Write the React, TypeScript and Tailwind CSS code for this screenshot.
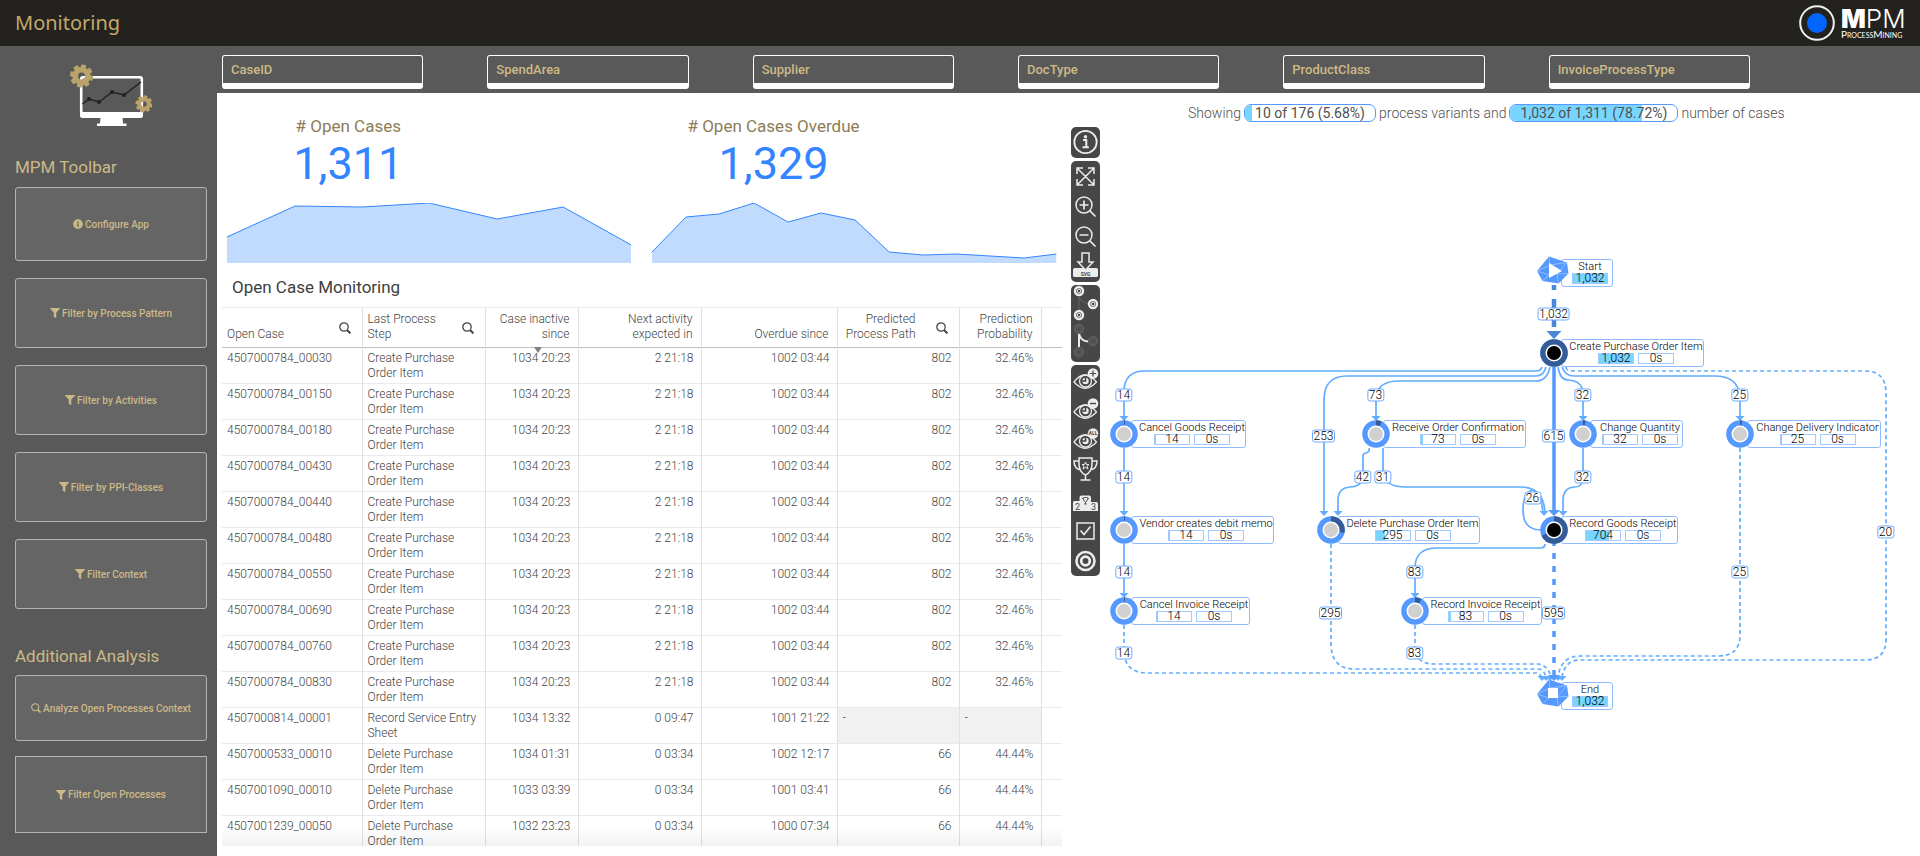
import { ReactNode } from "react";
import { FaFilter, FaInfoCircle } from "react-icons/fa";

const filters = ["CaseID", "SpendArea", "Supplier", "DocType", "ProductClass", "InvoiceProcessType"];

const toolbarButtons = [
  { label: "Configure App", icon: "info", size: "h-[74px]" },
  { label: "Filter by Process Pattern", icon: "filter", size: "h-[70px]" },
  { label: "Filter by Activities", icon: "filter", size: "h-[70px]" },
  { label: "Filter by PPI-Classes", icon: "filter", size: "h-[70px]" },
  { label: "Filter Context", icon: "filter", size: "h-[70px]" },
];

const analysisButtons = [
  { label: "Analyze Open Processes Context", icon: "search", size: "h-[66px]" },
  { label: "Filter Open Processes", icon: "filter", size: "h-[77px]" },
];

const columns = [
  { label: "Open Case", width: 140, search: true },
  { label: "Last Process Step", width: 123, search: true },
  { label: "Case inactive since", width: 93, right: true, sorted: true },
  { label: "Next activity expected in", width: 123, right: true },
  { label: "Overdue since", width: 136, right: true },
  { label: "Predicted Process Path", width: 122, right: true, search: true },
  { label: "Prediction Probability", width: 82, right: true },
];

const createStep = "Create Purchase Order Item";
const deleteStep = "Delete Purchase Order Item";

const rows = [
  ...["00030", "00150", "00180", "00430", "00440", "00480", "00550", "00690", "00760", "00830"].map((n) => [
    `4507000784_${n}`,
    createStep,
    "1034 20:23",
    "2 21:18",
    "1002 03:44",
    "802",
    "32.46%",
  ]),
  ["4507000814_00001", "Record Service Entry Sheet", "1034 13:32", "0 09:47", "1001 21:22", "-", "-"],
  ["4507000533_00010", deleteStep, "1034 01:31", "0 03:34", "1002 12:17", "66", "44.44%"],
  ["4507001090_00010", deleteStep, "1033 03:39", "0 03:34", "1001 03:41", "66", "44.44%"],
  ["4507001239_00050", deleteStep, "1032 23:23", "0 03:34", "1000 07:34", "66", "44.44%"],
];

const TOTAL = 1032;

const nodes = [
  { name: "Create Purchase Order Item", count: 1032, x: 454, y: 113, right: 604, main: true },
  { name: "Cancel Goods Receipt", count: 14, x: 24, y: 194, right: 146 },
  { name: "Receive Order Confirmation", count: 73, x: 276, y: 194, right: 426 },
  { name: "Change Quantity", count: 32, x: 483, y: 194, right: 583 },
  { name: "Change Delivery Indicator", count: 25, x: 640, y: 194, right: 781 },
  { name: "Vendor creates debit memo", count: 14, x: 24, y: 290, right: 174 },
  { name: "Delete Purchase Order Item", count: 295, x: 231, y: 290, right: 380 },
  { name: "Record Goods Receipt", count: 704, x: 454, y: 290, right: 578, main: true },
  { name: "Cancel Invoice Receipt", count: 14, x: 24, y: 371, right: 150 },
  { name: "Record Invoice Receipt", count: 83, x: 315, y: 371, right: 442 },
];

const solidEdges = [
  "M442 127 Q441 131 436 131 H45 Q24 131 24 152 V178",
  "M446 127 Q444 136 436 136 H247 Q224 136 224 160 V273",
  "M450 127 Q447 141 436 141 H298 Q280 141 276 155 V178",
  "M458 127 Q460 140 468 140 Q483 141 483 154 V178",
  "M462 127 Q465 136 474 136 H615 Q637 136 640 155 V178",
  "M24 208 V273",
  "M24 304 V355",
  "M269 208 Q270 212 266 213 Q263 213 263 216 V236 Q262 247 250 247 Q238 248 238 260 V273",
  "M283 208 V236 Q288 247 305 247 H422 Q444 248 445 273",
  "M441 290 Q423 290 423 270 Q423 252 433 250 Q441 252 443 273",
  "M483 208 V240 Q482 247 474 247 Q463 248 463 260 V273",
  "M445 304 Q445 308 440 308 H337 Q315 308 315 328 V355",
];

const dashedEdges = [
  "M466 127 Q466 131 472 131 H765 Q786 131 786 153 V399 Q786 420 765 420 H478 Q465 421 462 437",
  "M640 208 V395 Q640 416 618 416 H480 Q461 416 458 437",
  "M24 385 V413 Q26 433 47 433 H438 L442 437",
  "M231 304 V405 Q232 429 254 429 H438 Q444 429 446 437",
  "M315 385 V413 Q320 424 334 424 H438 Q448 425 451 437",
];

const arrows = [
  [24, 180], [276, 180], [483, 180], [640, 180],
  [24, 275], [224, 275], [238, 275], [444, 275], [463, 275],
  [24, 357], [315, 357],
  [442, 440], [446, 440], [450, 440], [458, 440], [462, 440],
];

const edgeLabels: [string, number, number][] = [
  ["1,032", 454, 74],
  ["14", 24, 155], ["73", 276, 155], ["32", 483, 155], ["25", 640, 155],
  ["253", 224, 196], ["615", 454, 196],
  ["14", 24, 237], ["42", 263, 237], ["31", 283, 237], ["32", 483, 237],
  ["26", 433, 258], ["20", 786, 292],
  ["14", 24, 332], ["83", 315, 332], ["25", 640, 332],
  ["295", 231, 373], ["595", 454, 373],
  ["14", 24, 413], ["83", 315, 413],
];

function SearchIcon({ className }: { className: string }) {
  return (
    <svg viewBox="0 0 12 12" className={className} fill="none" stroke="currentColor">
      <circle cx="5" cy="5" r="4.2" strokeWidth="1.3" />
      <path d="M8 8 L11.4 11.4" strokeWidth="2" />
    </svg>
  );
}

function Gear({ cx, cy, r, hole }: { cx: number; cy: number; r: number; hole: number }) {
  return (
    <g transform={`translate(${cx} ${cy})`}>
      {[0, 45, 90, 135, 180, 225, 270, 315].map((a) => (
        <path
          key={a}
          d={`M${-r * 0.26} ${-r * 0.6} L${-r * 0.2} ${-r} H${r * 0.2} L${r * 0.26} ${-r * 0.6} Z`}
          fill="#b9a36b"
          transform={`rotate(${a + 12})`}
        />
      ))}
      <circle r={(r * 0.78 + hole) / 2} fill="none" stroke="#b9a36b" strokeWidth={r * 0.78 - hole} />
    </g>
  );
}

function MonitorIcon() {
  return (
    <svg viewBox="70 64 82 64" className="h-16 w-[82px]">
      <rect x="81.2" y="77.2" width="60.6" height="36" rx="2" fill="none" stroke="#fff" strokeWidth="2.6" />
      <path d="M80 112 H143 V115.500 Q143 118 140.500 118 H82.500 Q80 118 80 115.500 Z" fill="#fff" />
      <path d="M100.500 118 H122.500 L123 123.500 H126.500 V126 H97 V123.500 H100 Z" fill="#fff" />
      <path d="M82.500 104 L89 99 L99 102 L112 92 L124 95 L141 82" fill="none" stroke="#24221e" strokeWidth="1.5" />
      {[[89, 99], [99, 102], [112, 92], [124, 95]].map(([x, y]) => (
        <circle key={x} cx={x} cy={y} r="2" fill="#24221e" />
      ))}
      <Gear cx={81.5} cy={76} r={11.5} hole={3.5} />
      <Gear cx={144} cy={104} r={8.5} hole={2.8} />
    </svg>
  );
}

function SideButton({ label, icon, size, square }: { label: string; icon: string; size: string; square?: boolean }) {
  return (
    <button
      className={`flex w-full items-center justify-center gap-[2px] border border-[#b3b3b3] bg-[#656565] text-[10px] font-medium text-[#cdb987] ${size} ${
        square ? "" : "rounded-[3px]"
      }`}
    >
      {icon === "info" && <FaInfoCircle className="h-[10px] w-[10px]" />}
      {icon === "filter" && <FaFilter className="h-[10px] w-[10px]" />}
      {icon === "search" && <SearchIcon className="h-[10px] w-[10px]" />}
      <span>{label}</span>
    </button>
  );
}

function Kpi({ title, value, points }: { title: string; value: string; points: string }) {
  return (
    <div>
      <div className="w-3/5 text-center whitespace-nowrap">
        <h2 className="text-[17px] leading-6 text-[#8c7d56]">{title}</h2>
        <div className="text-[45px] leading-[52px] text-[#3385ff]">{value}</div>
      </div>
      <svg viewBox="0 0 404 60" preserveAspectRatio="none" className="mt-[13px] block h-[60px] w-full">
        <polygon points={`0,60 ${points} 404,60`} fill="#c1dbff" />
        <polyline points={points} fill="none" stroke="#3385ff" strokeWidth="1" vectorEffect="non-scaling-stroke" />
      </svg>
    </div>
  );
}

function CaseTable() {
  return (
    <div className="relative mb-[10px] min-h-0 flex-1 overflow-hidden border-t border-[#ebebeb]">
      <table className="w-full table-fixed border-collapse text-[12px] leading-[15px] font-light text-[#454545]">
        <colgroup>
          {columns.map((c) => (
            <col key={c.label} style={{ width: c.width }} />
          ))}
          <col />
        </colgroup>
        <thead>
          <tr className="h-[39px] border-b border-[#bfbfbf]">
            {columns.map((c) => (
              <th
                key={c.label}
                className={`relative border-r border-[#e0e0e0] pb-[5px] pl-[5px] align-bottom font-light ${
                  c.search ? "pr-[11px]" : "pr-2"
                } ${c.right ? "text-right" : "text-left"}`}
              >
                <div className={`flex items-end gap-5 ${c.right ? "justify-end" : "justify-between"}`}>
                  <span className={c.search && !c.right ? "w-[78px]" : ""}>{c.label}</span>
                  {c.search && (
                    <button aria-label={`Search ${c.label}`} className="mb-2 shrink-0">
                      <SearchIcon className="h-3 w-3" />
                    </button>
                  )}
                </div>
                {c.sorted && (
                  <svg viewBox="0 0 8 6" className="absolute right-9 -bottom-[6px] z-10 h-[6px] w-2">
                    <path d="M0 0 H8 L4 6 Z" fill="#808080" />
                  </svg>
                )}
              </th>
            ))}
            <th />
          </tr>
        </thead>
        <tbody>
          {rows.map((row) => (
            <tr key={row[0]} className="h-9 border-b border-[#ebebeb]">
              {row.map((cell, i) => (
                <td
                  key={i}
                  className={`border-r border-[#e0e0e0] pt-[3px] pr-[7px] pl-[5px] align-top ${
                    cell === "-" ? "bg-[#f1f1f1] text-left" : i > 1 ? "text-right" : "text-left"
                  }`}
                >
                  {cell}
                </td>
              ))}
              <td />
            </tr>
          ))}
        </tbody>
      </table>
      <div className="absolute inset-x-0 bottom-0 h-5 bg-gradient-to-b from-transparent to-black/5" />
    </div>
  );
}

function Tool({ label, tall, children }: { label: string; tall?: boolean; children: ReactNode }) {
  return (
    <button aria-label={label} className="block">
      <svg
        viewBox={tall ? "0 0 29 38" : "0 0 29 30"}
        className={tall ? "h-[38px] w-[29px]" : "h-[30px] w-[29px]"}
        fill="none"
        stroke="#ececec"
        strokeWidth="1.5"
      >
        {children}
      </svg>
    </button>
  );
}

function Eye({ children }: { children: ReactNode }) {
  return (
    <>
      <path d="M3 17 Q13.500 3 25.500 17 Q14 29.500 3 17 Z" strokeWidth="1.300" />
      <circle cx="14.500" cy="16" r="6" strokeWidth="1.300" />
      <circle cx="14.500" cy="16" r="3.200" fill="#ececec" stroke="none" />
      <path d="M14.500 12.500 V16 H11" stroke="#474747" strokeWidth="1.600" />
      <circle cx="22" cy="8.500" r="5.300" fill="#ececec" stroke="none" />
      {children}
    </>
  );
}

function Ring({ cx, cy }: { cx: number; cy: number }) {
  return (
    <>
      <circle cx={cx} cy={cy} r="4" strokeWidth="2.4" />
      <circle cx={cx} cy={cy} r="1.8" strokeWidth="1" />
    </>
  );
}

function ToolGroup({ children }: { children: ReactNode }) {
  return <div className="rounded-[5px] bg-[#474747] pb-px">{children}</div>;
}

function GraphTools() {
  return (
    <div className="mt-[34px] flex w-[29px] shrink-0 flex-col gap-[3px]">
      <ToolGroup>
        <Tool label="Info">
          <circle cx="14.500" cy="15" r="11.200" strokeWidth="1.800" />
          <circle cx="14.500" cy="9.800" r="1.700" fill="#ececec" stroke="none" />
          <path d="M12 13 H15.300 V20 M11.500 20.300 H17.800" strokeWidth="2" />
        </Tool>
      </ToolGroup>
      <ToolGroup>
        <Tool label="Fit to screen">
          <path d="M6 7 L23 24 M23 7 L6 24 M6 13 V7 H12 M17 7 H23 V13 M23 18 V24 H17 M12 24 H6 V18" />
        </Tool>
        <Tool label="Zoom in">
          <circle cx="13" cy="14" r="8" />
          <path d="M13 9.500 V18.500 M8.500 14 H17.500 M18.500 19.500 L24.500 25.500" strokeWidth="1.700" />
        </Tool>
        <Tool label="Zoom out">
          <circle cx="13" cy="14" r="8" />
          <path d="M8.500 14 H17.500 M18.500 19.500 L24.500 25.500" strokeWidth="1.700" />
        </Tool>
        <Tool label="Download SVG">
          <rect x="2" y="17" width="25" height="9" rx="1.500" fill="#ececec" stroke="none" />
          <path d="M11 2 H18 V11 H22 L14.500 19 L7 11 H11 Z" fill="#474747" />
          <text x="14.500" y="24.500" textAnchor="middle" fontSize="5" fontWeight="700" fill="#474747" stroke="none">
            SVG
          </text>
        </Tool>
      </ToolGroup>
      <ToolGroup>
        <Tool label="Show nodes" tall>
          <path d="M8 12 V25 M8 12 Q10 18 20 19" stroke="#5c5c5c" />
          <Ring cx={8} cy={6} />
          <Ring cx={22} cy={19} />
          <Ring cx={8} cy={30} />
        </Tool>
        <Tool label="Show edges" tall>
          <g stroke="#5c5c5c">
            <Ring cx={8} cy={6} />
            <Ring cx={22} cy={18} />
            <Ring cx={8} cy={29} />
          </g>
          <path d="M8 11 V24 M8 11 Q10 18 17 18.500" strokeWidth="2" />
        </Tool>
      </ToolGroup>
      <ToolGroup>
        <Tool label="Show more">
          <Eye>
            <path d="M22 5.500 V11.500 M19 8.500 H25" stroke="#474747" strokeWidth="1.200" />
          </Eye>
        </Tool>
        <Tool label="Show less">
          <Eye>
            <path d="M19 8.500 H25" stroke="#474747" strokeWidth="1.400" />
          </Eye>
        </Tool>
        <Tool label="Show all">
          <Eye>
            <text x="22" y="10.300" textAnchor="middle" fontSize="5" fontWeight="700" fill="#474747" stroke="none">
              ALL
            </text>
          </Eye>
        </Tool>
        <Tool label="Best variant">
          <path d="M8 3 H21 V9 Q21 17 14.500 20 Q8 17 8 9 Z M8 6 H3 Q3 14 10 15 M21 6 H26 Q26 14 19 15 M14.500 20 V25 M9.500 25 H19.500" />
          <path d="M14.500 7 L15.500 9.500 H18 L16 11.300 L17 14 L14.500 12.300 L12 14 L13 11.300 L11 9.500 H13.500 Z" strokeWidth="1" />
        </Tool>
        <Tool label="Ranking">
          <path d="M3.500 16 H8.500 V12.500 Q8.500 10.500 10.500 10.500 H18 Q20 10.500 20 12.500 V17 H25.500 Q27 17 27 18.500 V26 H2 V17.500 Q2 16 3.500 16 Z" fill="#ececec" stroke="none" />
          <path d="M12.500 12.500 H16.500 V14 Q16.500 16.500 14.500 17 Q12.500 16.500 12.500 14 Z M14.500 17 V19 M13 19 H16 M11 12.800 L12 14.500 M18 12.800 L17 14.500" stroke="#474747" strokeWidth="0.800" />
          <text x="6.500" y="24.500" textAnchor="middle" fontSize="9" fill="#474747" stroke="none">
            2
          </text>
          <text x="22.500" y="25" textAnchor="middle" fontSize="9" fill="#474747" stroke="none">
            3
          </text>
        </Tool>
        <Tool label="Select">
          <rect x="6" y="8" width="17" height="16" />
          <path d="M9.500 15.500 L13 19.500 L19.500 11.500" strokeWidth="1.700" />
        </Tool>
        <Tool label="Target">
          <circle cx="14.500" cy="16" r="9" strokeWidth="2.600" />
          <circle cx="14.500" cy="16" r="4.300" strokeWidth="2.800" />
        </Tool>
      </ToolGroup>
    </div>
  );
}

function Pill({ text, share, className }: { text: string; share: number; className: string }) {
  return (
    <span
      className={`relative inline-flex h-[18px] items-center justify-center overflow-hidden rounded-[7px] border border-[#5599ff] font-normal ${className}`}
    >
      <span className="absolute inset-y-0 left-0 bg-[#77d5ff]" style={{ width: `${share}%` }} />
      <span className="relative">{text}</span>
    </span>
  );
}

function CountBar({ text, share }: { text: string; share: number }) {
  return (
    <span className="relative flex h-[11px] w-9 items-center justify-center border border-[#a5c8ff] text-[12px]">
      <span className="absolute inset-y-0 left-0 bg-[#77d5ff]" style={{ width: `${share}%` }} />
      <span className="relative">{text}</span>
    </span>
  );
}

function GraphNode({ node }: { node: (typeof nodes)[number] }) {
  const share = (node.count / TOTAL) * 100;
  return (
    <div className="absolute" style={{ left: node.x, top: node.y - 14 }}>
      <div
        className="ml-[7px] flex h-7 flex-col items-center rounded-[3px] border border-[#8ebaff] bg-white pl-2 whitespace-nowrap"
        style={{ width: node.right - node.x - 7 }}
      >
        <span className="text-[11px] leading-[13px]">{node.name}</span>
        <span className="flex gap-1">
          <CountBar text={String(node.count === 1032 ? "1,032" : node.count)} share={share} />
          <CountBar text="0s" share={0} />
        </span>
      </div>
      <svg viewBox="-14 -14 28 28" className="absolute top-0 -left-[14px] h-7 w-7">
        <circle r="13.8" fill="#5599ff" />
        <circle
          r="11"
          fill="none"
          stroke="#335c99"
          strokeWidth="5.5"
          pathLength="100"
          strokeDasharray={`${share} 100`}
          transform="rotate(-90)"
        />
        <circle r="8.500" fill="#fff" />
        <circle r="7" fill={node.main ? "#000" : "#d0d0d0"} />
      </svg>
    </div>
  );
}

// start and end markers share the faceted gem shape
function Terminal({ name, y, children }: { name: string; y: number; children: ReactNode }) {
  return (
    <div className="absolute left-[437px]" style={{ top: y - 15 }}>
      <div className="mt-[3px] ml-[24px] flex h-7 w-[52px] flex-col items-center rounded-[3px] border border-[#8ebaff] bg-white pl-[7px]">
        <span className="text-[11px] leading-[13px]">{name}</span>
        <CountBar text="1,032" share={100} />
      </div>
      <svg viewBox="0 0 32 28" className="absolute top-0 left-0 h-7 w-8">
        <path d="M12 0.500 L30 6.500 L31.500 17.500 L21.500 27.500 L5.500 25 L0 15 Z" fill="#5599ff" />
        <path
          d="M12 0.500 L13 9 L0 15 M13 9 L30 6.500 M20 18 L31.500 17.500 M20 18 L21.500 27.500 M12 19 L5.500 25 M12 19 L0 15 M20 18 L30 6.500"
          stroke="#a9ccff"
          strokeWidth="0.700"
          fill="none"
        />
        {children}
      </svg>
    </div>
  );
}

function ProcessGraph() {
  return (
    <div className="relative mt-[118px] h-[480px] w-[800px] text-[12px] leading-[11px] font-light text-black">
      <svg viewBox="0 0 800 480" className="absolute inset-0 h-[480px] w-[800px]" fill="none" stroke="#62adff">
        {solidEdges.map((d) => (
          <path key={d} d={d} strokeWidth="1.700" />
        ))}
        {dashedEdges.map((d) => (
          <path key={d} d={d} strokeWidth="1.700" strokeDasharray="4 3" />
        ))}
        <path d="M454 45 V92" stroke="#4a87db" strokeWidth="4.500" strokeDasharray="5 9 28 9" />
        <path d="M446.500 91 H461.500 L454 99 Z" fill="#4a87db" stroke="none" />
        <path d="M454 127 V272" stroke="#5599ff" strokeWidth="3.500" />
        <path d="M448 270 H460 L454 276 Z" fill="#5599ff" stroke="none" />
        <path d="M454 300 V437" stroke="#5599ff" strokeWidth="3.500" strokeDasharray="6 7" />
        {arrows.map(([x, y], i) => (
          <path key={i} d={`M${x - 4.5} ${y - 4} H${x + 4.5} L${x} ${y + 1} Z`} fill="#62adff" stroke="none" />
        ))}
        <path d="M448 435 H460 L454 441 Z" fill="#5599ff" stroke="none" />
      </svg>
      {edgeLabels.map(([text, x, y], i) => (
        <span
          key={i}
          className="absolute h-[13px] -translate-x-1/2 -translate-y-1/2 rounded-[3px] border border-[#6ba8ff] bg-white px-px"
          style={{ left: x, top: y }}
        >
          {text}
        </span>
      ))}
      {nodes.map((node) => (
        <GraphNode key={node.name} node={node} />
      ))}
      <Terminal name="Start" y={31}>
        <path d="M12 7 L25 15 L12 22 Z" fill="#fff" />
      </Terminal>
      <Terminal name="End" y={454}>
        <path d="M11 9 H21 V19 H11 Z" fill="#fff" />
      </Terminal>
    </div>
  );
}

export default function App() {
  return (
    <div className="flex h-screen flex-col overflow-hidden bg-[#595959] font-[Roboto,sans-serif]">
      <header className="flex h-[46px] shrink-0 items-center justify-between bg-[#24221e] pr-[14px] pl-[15px]">
        <h1 className="font-['Noto_Sans',sans-serif] text-[20px] text-[#c3a86c]">Monitoring</h1>
        <div className="flex items-center gap-[6px] text-white">
          <svg viewBox="0 0 36 36" className="h-9 w-9">
            <circle cx="18" cy="18" r="16.800" fill="none" stroke="#f0f0f0" strokeWidth="2" />
            <circle cx="18" cy="18" r="10" fill="#0066ff" />
          </svg>
          <div className="w-[65px] whitespace-nowrap">
            <div className="font-[Inter,sans-serif] text-[26px] leading-[22px] font-light">
              <b className="font-black">M</b>PM
            </div>
            <div className="font-[Lato,sans-serif] text-[10px] leading-[9px] [font-variant-caps:small-caps]">
              ProcessMining
            </div>
          </div>
        </div>
      </header>

      <div className="flex min-h-0 flex-1">
        <aside className="w-[217px] shrink-0 pr-[10px] pl-[15px]">
          <div className="flex justify-center pt-[18px]">
            <MonitorIcon />
          </div>
          <h2 className="mt-[27px] mb-2 text-[17px] leading-6 text-[#cdb987]">MPM Toolbar</h2>
          <div className="flex flex-col gap-[17px]">
            {toolbarButtons.map((b) => (
              <SideButton key={b.label} {...b} />
            ))}
          </div>
          <h2 className="mt-[35px] mb-[7px] text-[17px] leading-6 text-[#cdb987]">Additional Analysis</h2>
          <div className="flex flex-col gap-[15px]">
            {analysisButtons.map((b, i) => (
              <SideButton key={b.label} {...b} square={i === 1} />
            ))}
          </div>
        </aside>

        <main className="flex min-w-0 flex-1 flex-col">
          <div className="grid h-[47px] shrink-0 grid-cols-6 gap-x-16 pt-[9px] pr-[170px] pl-[5px]">
            {filters.map((f) => (
              <button
                key={f}
                className="h-[34px] rounded-[3px] border border-b-[6px] border-white pl-2 text-left text-[13px] font-medium text-[#cdb987]"
              >
                {f}
              </button>
            ))}
          </div>

          <div className="grid min-h-0 flex-1 grid-cols-2 bg-white">
            <section className="flex min-h-0 flex-col pr-[7px] pl-[5px]">
              <div className="grid grid-cols-2 gap-x-[21px] px-[5px] pt-[21px]">
                <Kpi title="# Open Cases" value="1,311" points="0,34 68,3 135,4 202,0 270,16 336,4 404,42" />
                <Kpi
                  title="# Open Cases Overdue"
                  value="1,329"
                  points="0,49 34,14 67,11 102,0 136,19 169,10 203,17 237,49 271,52 304,51 338,53 372,55 404,51"
                />
              </div>
              <h2 className="mt-3 mb-2 pl-[10px] text-[17px] leading-6 text-[#404040]">Open Case Monitoring</h2>
              <CaseTable />
            </section>

            <section className="relative min-w-0 pl-[2px]">
              <div className="absolute inset-x-0 top-[11px] flex items-center justify-center gap-[3px] pr-4 text-[14px] leading-[18px] font-light text-[#505050]">
                Showing
                <Pill text="10 of 176 (5.68%)" share={5.68} className="w-[132px]" />
                process variants and
                <Pill text="1,032 of 1,311 (78.72%)" share={78.72} className="w-[169px]" />
                number of cases
              </div>
              <div className="flex">
                <GraphTools />
                <div className="mt-[29px]">
                  <ProcessGraph />
                </div>
              </div>
            </section>
          </div>
        </main>
      </div>
    </div>
  );
}
